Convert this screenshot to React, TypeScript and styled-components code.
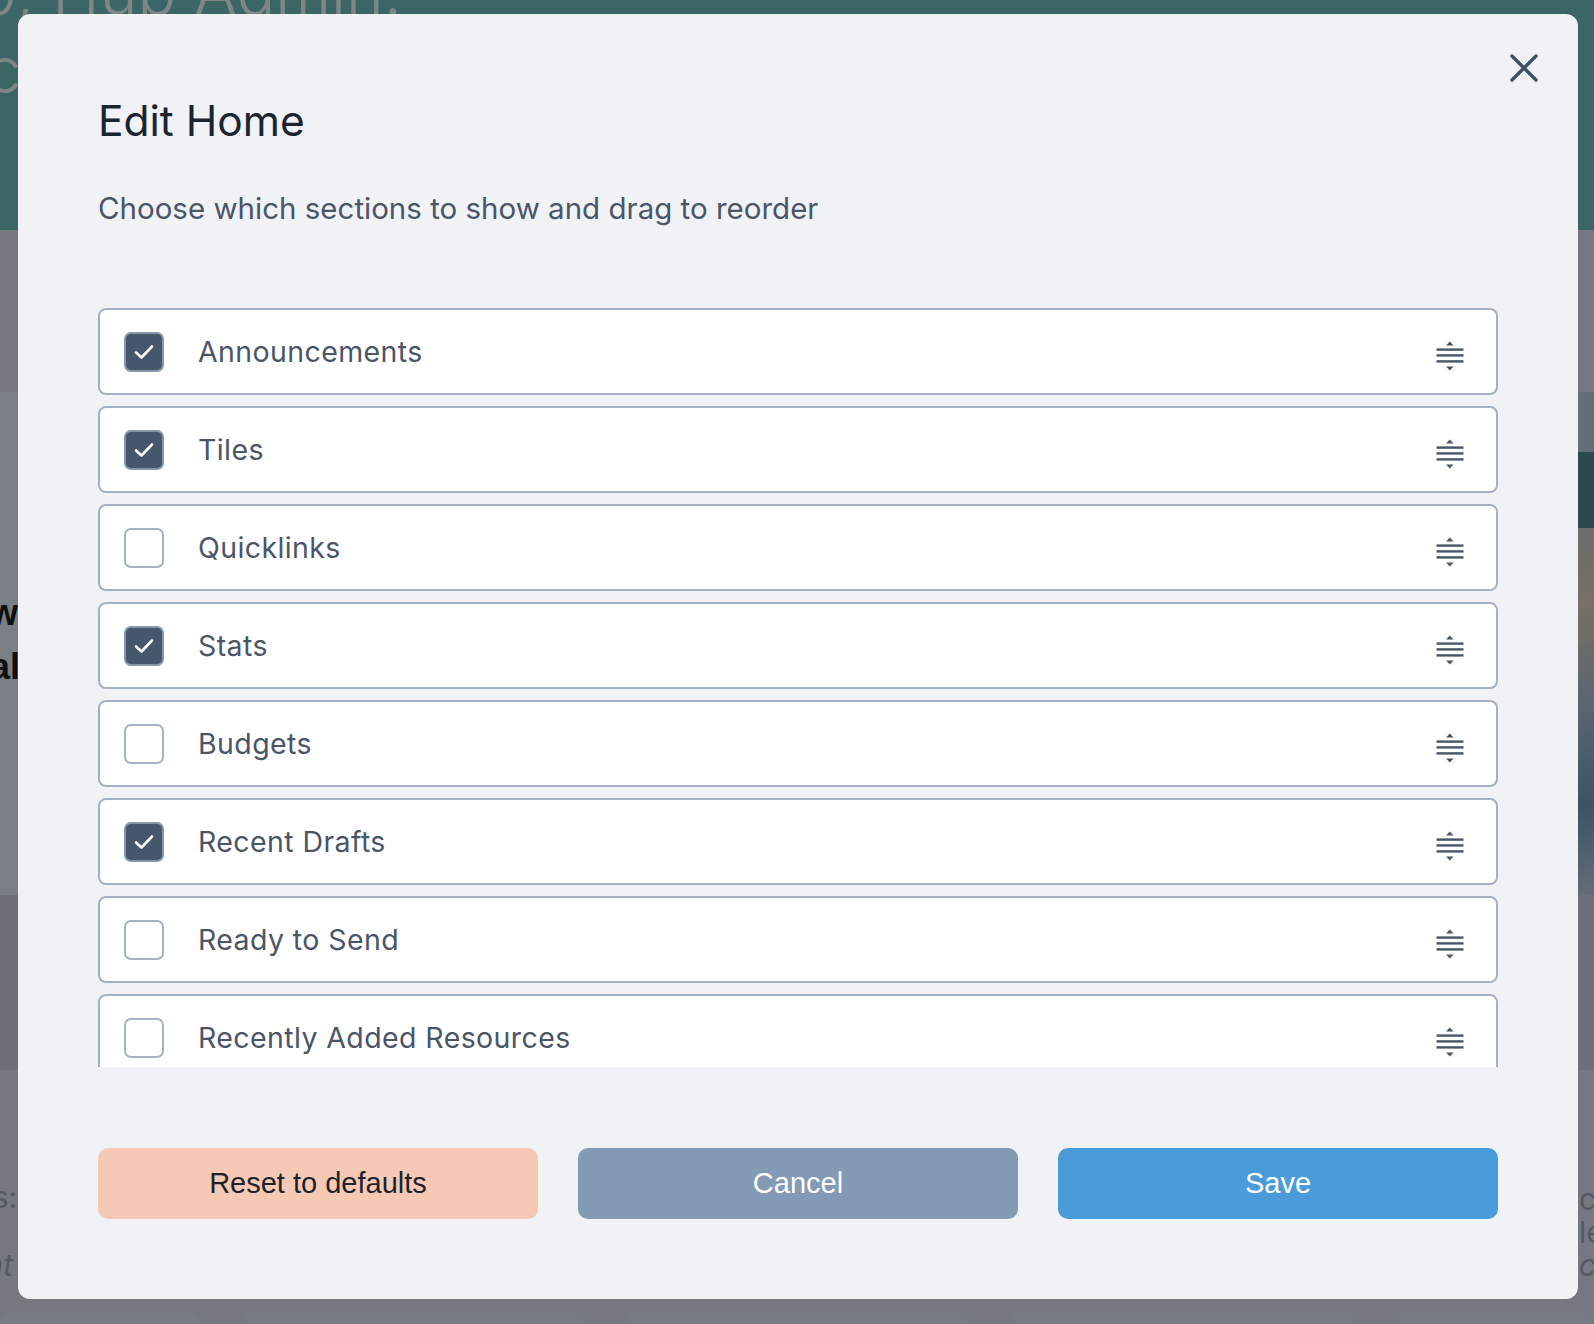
import { FC, useState } from "react";
import styled, { createGlobalStyle } from "styled-components";

const GlobalStyle = createGlobalStyle`
  html, body {
    margin: 0;
    padding: 0;
  }
  body {
    width: 1594px;
    height: 1324px;
    overflow: hidden;
    font-family: Inter, "Noto Sans", sans-serif;
  }
`;

/* ---------- page behind the dialog ---------- */

const Page = styled.div`
  position: relative;
  width: 1594px;
  height: 1324px;
  overflow: hidden;
  display: flex;
  flex-direction: column;
  background: #d5dce7;
`;

const Hero = styled.header`
  flex: 0 0 230px;
  overflow: hidden;
  background: #6db8bb;
`;

const Greeting = styled.h1`
  margin: -47px 0 0 -136px;
  font: 300 64px/78px Inter, sans-serif;
  color: rgba(255, 255, 255, 0.85);
  white-space: nowrap;
`;

const Band = styled.section<{ $h: number; $bg: string }>`
  flex: 0 0 ${(p) => p.$h}px;
  background: ${(p) => p.$bg};
  display: flex;
`;

const FeatureText = styled.div`
  flex: 1;
  padding-top: 194px;
  margin-left: -10px;
  font: 700 36px/54px "Liberation Sans", sans-serif;
  color: #1e1e1e;
  white-space: nowrap;
`;

const FeatureImage = styled.div`
  flex: 0 0 240px;
  display: flex;
  flex-direction: column;
  background: #e3eaf4;
`;

const ImageTop = styled.div`
  flex: 0 0 60px;
  background: #b5cbd6;
`;

const ImageBar = styled.div`
  flex: 0 0 76px;
  background: #50878e;
`;

const ImageArt = styled.div`
  flex: 1;
  background: linear-gradient(160deg, #a9bfd3 0%, #d9cdb9 35%, #9fb7cc 60%, #6f98b8 80%, #b9c9da 100%);
`;

const Notes = styled.section`
  flex: 0 0 220px;
  display: grid;
  grid-template-columns: 1fr 15px;
  font: 400 30px Inter, sans-serif;
  color: #98a4b6;
`;

const NoteCol = styled.div<{ $top: number; $lh: number; $shift?: number }>`
  padding-top: ${(p) => p.$top}px;
  margin-left: ${(p) => p.$shift ?? 0}px;
  line-height: ${(p) => p.$lh}px;
  white-space: nowrap;
`;

const Cards = styled.div`
  flex: 1;
  display: grid;
  grid-template-columns: 201px repeat(3, 345px) 1fr;
  gap: 40px;
  padding-top: 12px;
`;

const Card = styled.div`
  background: #d8e0ec;
  border-radius: 14px 14px 0 0;
`;

const Overlay = styled.div`
  position: absolute;
  inset: 0;
  background: rgba(0, 0, 0, 0.45);
  display: flex;
  align-items: flex-start;
  padding: 14px 0 0 18px;
`;

/* ---------- dialog ---------- */

const Modal = styled.div`
  position: relative;
  width: 1560px;
  height: 1285px;
  box-sizing: border-box;
  padding: 81px 80px 80px;
  display: flex;
  flex-direction: column;
  background: #f0f2f6;
  border-radius: 12px;
`;

const CloseButton = styled.button`
  position: absolute;
  top: 40px;
  right: 40px;
  width: 28px;
  height: 28px;
  padding: 0;
  border: none;
  background: none;
  color: #3f5166;
  cursor: pointer;
`;

const Title = styled.h2`
  margin: 0;
  font: 400 42.5px Inter, sans-serif;
  color: #1c2430;
`;

const Subtitle = styled.p`
  margin: 44px 0 0;
  font: 400 29.5px Inter, sans-serif;
  color: #4a5568;
`;

const List = styled.ul`
  margin: 82px 0 0;
  padding: 0;
  list-style: none;
  height: 759px;
  overflow-y: auto;
  scrollbar-width: none;
  display: flex;
  flex-direction: column;
  gap: 11px;
  &::-webkit-scrollbar {
    display: none;
  }
`;

const Row = styled.li`
  flex: 0 0 87px;
  box-sizing: border-box;
  display: flex;
  align-items: center;
  padding: 0 32px 0 24px;
  background: #ffffff;
  border: 2px solid #a4b1c2;
  border-radius: 8px;
`;

const Box = styled.button<{ $on: boolean }>`
  flex: 0 0 40px;
  width: 40px;
  height: 40px;
  box-sizing: border-box;
  padding: 0;
  display: grid;
  place-items: center;
  border-radius: 7px;
  border: 2px solid ${(p) => (p.$on ? "#8797ab" : "#a7b3c3")};
  background: ${(p) => (p.$on ? "#46566b" : "#ffffff")};
  cursor: pointer;
`;

const Label = styled.span`
  margin-left: 34px;
  font: 400 28.5px Inter, sans-serif;
  letter-spacing: 0.4px;
  color: #4a5568;
`;

const Grip = styled.span`
  margin-left: auto;
  margin-top: 8px;
  display: flex;
  color: #4a5568;
  cursor: grab;
`;

const Footer = styled.div`
  margin-top: 81px;
  display: grid;
  grid-template-columns: repeat(3, 1fr);
  gap: 40px;
`;

const Action = styled.button<{ $bg: string; $fg: string }>`
  height: 71px;
  border: none;
  border-radius: 10px;
  background: ${(p) => p.$bg};
  color: ${(p) => p.$fg};
  font: 400 29px "Liberation Sans", Arial, sans-serif;
  cursor: pointer;
`;

const sections = [
  { name: "Announcements", on: true },
  { name: "Tiles", on: true },
  { name: "Quicklinks", on: false },
  { name: "Stats", on: true },
  { name: "Budgets", on: false },
  { name: "Recent Drafts", on: true },
  { name: "Ready to Send", on: false },
  { name: "Recently Added Resources", on: false },
  { name: "Upcoming Events", on: false },
];

const GripIcon: FC = () => (
  <svg width="28" height="30" viewBox="0 0 28 30" fill="currentColor">
    <polygon points="10,4.6 13.8,0.6 17.6,4.6" />
    <rect x="0.5" y="7.4" width="27" height="2.4" />
    <rect x="0.5" y="13.2" width="27" height="2.4" />
    <rect x="0.5" y="19.2" width="27" height="2.4" />
    <polygon points="10,25.4 17.6,25.4 13.8,29.4" />
  </svg>
);

const CheckMark: FC = () => (
  <svg width="26" height="26" viewBox="0 0 26 26" fill="none">
    <path d="M5 13.5 L10.5 18.5 L21 7.5" stroke="#fff" strokeWidth="2.6" strokeLinecap="round" strokeLinejoin="round" />
  </svg>
);

const SectionRow: FC<{ name: string; on: boolean; onToggle: () => void }> = ({ name, on, onToggle }) => (
  <Row>
    <Box $on={on} role="checkbox" aria-checked={on} onClick={onToggle}>
      {on && <CheckMark />}
    </Box>
    <Label>{name}</Label>
    <Grip>
      <GripIcon />
    </Grip>
  </Row>
);

const EditHome: FC = () => {
  const [items, setItems] = useState(sections);
  const toggle = (i: number) =>
    setItems((prev) => prev.map((s, j) => (j === i ? { ...s, on: !s.on } : s)));

  return (
    <Modal role="dialog" aria-labelledby="edit-home-title">
      <CloseButton aria-label="Close">
        <svg width="28" height="28" viewBox="0 0 28 28" fill="none">
          <path d="M2 2 L26 26 M26 2 L2 26" stroke="currentColor" strokeWidth="3.4" strokeLinecap="round" />
        </svg>
      </CloseButton>
      <Title id="edit-home-title">Edit Home</Title>
      <Subtitle>Choose which sections to show and drag to reorder</Subtitle>
      <List>
        {items.map((s, i) => (
          <SectionRow key={s.name} name={s.name} on={s.on} onToggle={() => toggle(i)} />
        ))}
      </List>
      <Footer>
        <Action $bg="#f6c9b6" $fg="#1f2329">Reset to defaults</Action>
        <Action $bg="#839ab4" $fg="#ffffff">Cancel</Action>
        <Action $bg="#4a9bd9" $fg="#ffffff">Save</Action>
      </Footer>
    </Modal>
  );
};

export default function App() {
  return (
    <>
      <GlobalStyle />
      <Page>
        <Hero>
          <Greeting>
            Hello, Hub Admin.
            <br />
            Get connected
          </Greeting>
        </Hero>
        <Band $h={162} $bg="#d5dce7" />
        <Band $h={503} $bg="#dee5f2">
          <FeatureText>
            what's new
            <br />
            alerts and updates
          </FeatureText>
          <FeatureImage>
            <ImageTop />
            <ImageBar />
            <ImageArt />
          </FeatureImage>
        </Band>
        <Band $h={175} $bg="#c6cdd8" />
        <Notes>
          <NoteCol $top={93} $lh={68} $shift={-85}>
            Topics:
            <br />
            <i>Recent Jobs</i>
          </NoteCol>
          <NoteCol $top={113} $lh={33}>
            cities
            <br />
            learn
            <br />
            <i>c</i>
          </NoteCol>
        </Notes>
        <Cards>
          <Card />
          <Card />
          <Card />
          <Card />
          <Card />
        </Cards>
        <Overlay>
          <EditHome />
        </Overlay>
      </Page>
    </>
  );
}
